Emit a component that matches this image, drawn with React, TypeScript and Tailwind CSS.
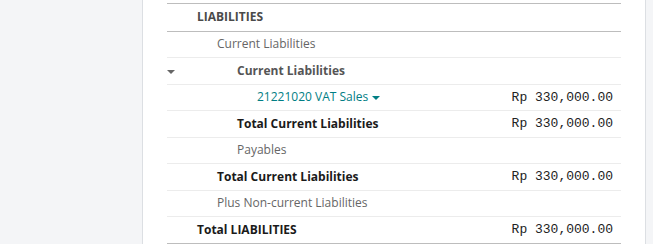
import React from 'react';

type Row = {
  label: string;
  indent: number;
  kind: 'header' | 'line' | 'group' | 'account' | 'total';
  amount?: string;
  caret?: boolean;
  heavyTop?: boolean;
};

const rows: Row[] = [
  { label: 'LIABILITIES', indent: 0, kind: 'header' },
  { label: 'Current Liabilities', indent: 1, kind: 'line', heavyTop: true },
  { label: 'Current Liabilities', indent: 2, kind: 'group', caret: true },
  { label: '21221020 VAT Sales', indent: 3, kind: 'account', amount: 'Rp 330,000.00' },
  { label: 'Total Current Liabilities', indent: 2, kind: 'total', amount: 'Rp 330,000.00' },
  { label: 'Payables', indent: 2, kind: 'line' },
  { label: 'Total Current Liabilities', indent: 1, kind: 'total', amount: 'Rp 330,000.00' },
  { label: 'Plus Non-current Liabilities', indent: 1, kind: 'line' },
  { label: 'Total LIABILITIES', indent: 0, kind: 'total', amount: 'Rp 330,000.00' },
];

const indentClass = ['pl-[29px]', 'pl-[49px]', 'pl-[69px]', 'pl-[89px]'];

const labelClass = (kind: Row['kind']) => {
  switch (kind) {
    case 'header':
      return 'font-bold text-[#4a4a4a]';
    case 'group':
      return 'font-bold text-[#555555]';
    case 'account':
      return 'text-[#017e84]';
    case 'total':
      return 'font-bold text-[#1a1a1a]';
    default:
      return 'text-[#666666]';
  }
};

const Caret = ({ className }: { className: string }) => (
  <svg viewBox="0 0 8 4" className={className} fill="currentColor">
    <path d="M0 0h8L4 4z" />
  </svg>
);

const ReportRow = ({ row, index }: { row: Row; index: number }) => (
  <div
    className={
      'flex h-[26.5px] items-center ' +
      (index === 0 ? '' : row.heavyTop ? 'border-t border-[#bdbdbd]' : 'border-t border-[#ececec]')
    }
  >
    <div className="relative flex flex-1 items-center pl-[1px]">
      {row.caret && <Caret className="absolute left-[0px] top-[calc(50%-1px)] h-[4px] w-[8px] text-[#666666]" />}
      <span className={indentClass[row.indent] + ' ' + labelClass(row.kind)}>{row.label}</span>
      {row.kind === 'account' && <Caret className="ml-[4px] mt-[1px] h-[4px] w-[8px] text-[#017e84]" />}
    </div>
    {row.amount && (
      <span className="pr-[8px] font-['Liberation_Mono','Courier_New',monospace] text-[13px] text-[#222222]">
        {row.amount}
      </span>
    )}
  </div>
);

export default function App() {
  return (
    <div className="flex h-[244px] w-[653px] overflow-hidden bg-[#f4f5f7] font-['Open_Sans','Noto_Sans',sans-serif] text-[12px]">
      <div className="w-[143px] border-r border-[#dcdfe3]" />
      <div className="w-[503px] border-r border-[#dcdfe3] bg-white pl-[24px] pr-[24px] pt-[3px]">
        <div className="border-t border-b border-[#bdbdbd]">
          {rows.map((row, i) => (
            <ReportRow key={i} row={row} index={i} />
          ))}
        </div>
      </div>
    </div>
  );
}
